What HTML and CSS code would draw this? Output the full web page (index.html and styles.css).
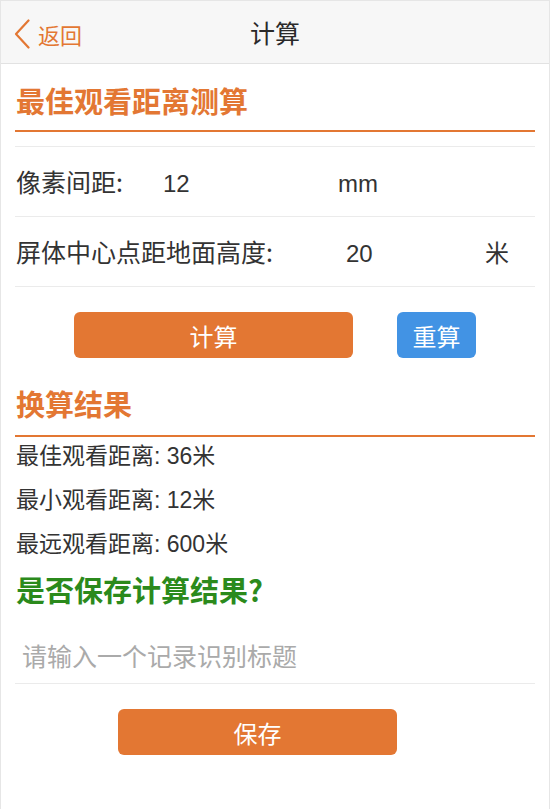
FILE: index.html
```html
<!DOCTYPE html>
<html lang="zh-CN">
<head>
<meta charset="utf-8">
<title>计算</title>
<link rel="stylesheet" href="styles.css">
</head>
<body>
<div class="page">
  <header class="nav">
    <div class="back">
      <svg class="chev" width="16" height="30" viewBox="0 0 16 30"><path d="M14.5 1.5 L2 15 L14.5 28.5" fill="none" stroke="#e37733" stroke-width="2.2" stroke-linecap="round" stroke-linejoin="round"/></svg>
      <span>返回</span>
    </div>
    <div class="nav-title">计算</div>
  </header>

  <main class="content">
    <h2 class="sec-title">最佳观看距离测算</h2>
    <div class="form">
      <div class="row r1">
        <span class="label">像素间距:</span>
        <span class="val">12</span>
        <span class="unit">mm</span>
      </div>
      <div class="row r2">
        <span class="label">屏体中心点距地面高度:</span>
        <span class="val">20</span>
        <span class="unit">米</span>
      </div>
    </div>

    <div class="btns">
      <button class="btn btn-calc">计算</button>
      <button class="btn btn-reset">重算</button>
    </div>

    <h2 class="sec-title sec-title2">换算结果</h2>
    <div class="results">
      <div class="res">最佳观看距离: 36米</div>
      <div class="res">最小观看距离: 12米</div>
      <div class="res">最远观看距离: 600米</div>
    </div>

    <h3 class="save-q">是否保存计算结果?</h3>
    <div class="input-row">
      <span class="placeholder">请输入一个记录识别标题</span>
    </div>
    <div class="save-wrap">
      <button class="btn btn-save">保存</button>
    </div>
  </main>
</div>
</body>
</html>
```

FILE: styles.css
```css
* { box-sizing: border-box; }
html, body {
  margin: 0;
  padding: 0;
  background: #ffffff;
}
body {
  font-family: "Liberation Sans", "Noto Sans CJK SC", sans-serif;
  color: #333333;
}
.page {
  width: 550px;
  height: 809px;
  border: 1px solid #e6e6e6;
  border-bottom: none;
  overflow: hidden;
}
.nav {
  height: 63px;
  background: #f7f7f7;
  border-bottom: 1px solid #e2e2e2;
  display: flex;
  align-items: center;
  justify-content: center;
  position: relative;
}
.back {
  position: absolute;
  left: 13px;
  top: 18px;
  display: flex;
  align-items: center;
  gap: 8px;
  color: #e37733;
  font-size: 22px;
  font-family: "Noto Sans CJK SC", sans-serif;
}
.back span { line-height: 30px; }
.nav-title {
  font-size: 25px;
  font-family: "Noto Sans CJK SC", sans-serif;
  color: #2a2a2a;
  font-weight: 400;
}
.content {
  padding: 0 14px;
}
.sec-title {
  margin: 16px 0 0;
  font-size: 29px;
  line-height: 40px;
  font-weight: 700;
  color: #e37733;
  font-family: "Noto Sans CJK SC", sans-serif;
  padding: 0 1px 10px;
  border-bottom: 2px solid #e37733;
}
.form {
  margin-top: 14px;
  border-top: 1px solid #ebebeb;
}
.row {
  height: 70px;
  border-bottom: 1px solid #ebebeb;
  display: grid;
  align-items: baseline;
  line-height: 69px;
  font-size: 24px;
  padding-left: 1px;
}
.r1 { grid-template-columns: 147px 175px auto; }
.r2 { grid-template-columns: 330px 139px auto; }
.label {
  font-size: 25px;
  font-family: "Noto Sans CJK SC", sans-serif;
  white-space: nowrap;
}
.btns {
  margin-top: 25px;
  display: flex;
  align-items: center;
}
.btn {
  border: none;
  color: #ffffff;
  font-size: 24px;
  font-family: "Noto Sans CJK SC", sans-serif;
  height: 46px;
  border-radius: 6px;
  padding: 0;
}
.btn-calc {
  background: #e37733;
  width: 279px;
  margin-left: 59px;
}
.btn-reset {
  background: #4293e4;
  width: 79px;
  margin-left: 44px;
}
.sec-title2 {
  margin-top: 25px;
  padding-bottom: 12px;
}
.results {
  margin-top: -3px;
  font-size: 23px;
  padding-left: 1px;
}
.res {
  line-height: 44px;
  height: 44px;
}
.save-q {
  margin: 3px 0 0;
  font-size: 29px;
  line-height: 40px;
  font-weight: 700;
  color: #2b8a1c;
  font-family: "Noto Sans CJK SC", sans-serif;
  padding-left: 1px;
}
.input-row {
  margin-top: 18px;
  height: 57px;
  border-bottom: 1px solid #ebebeb;
  display: flex;
  align-items: center;
  padding-left: 7px;
}
.placeholder {
  font-size: 25px;
  color: #aaaaaa;
  font-family: "Noto Sans CJK SC", sans-serif;
}
.save-wrap {
  margin-top: 25px;
  display: flex;
}
.btn-save {
  background: #e37733;
  width: 279px;
  margin-left: 103px;
}
```
